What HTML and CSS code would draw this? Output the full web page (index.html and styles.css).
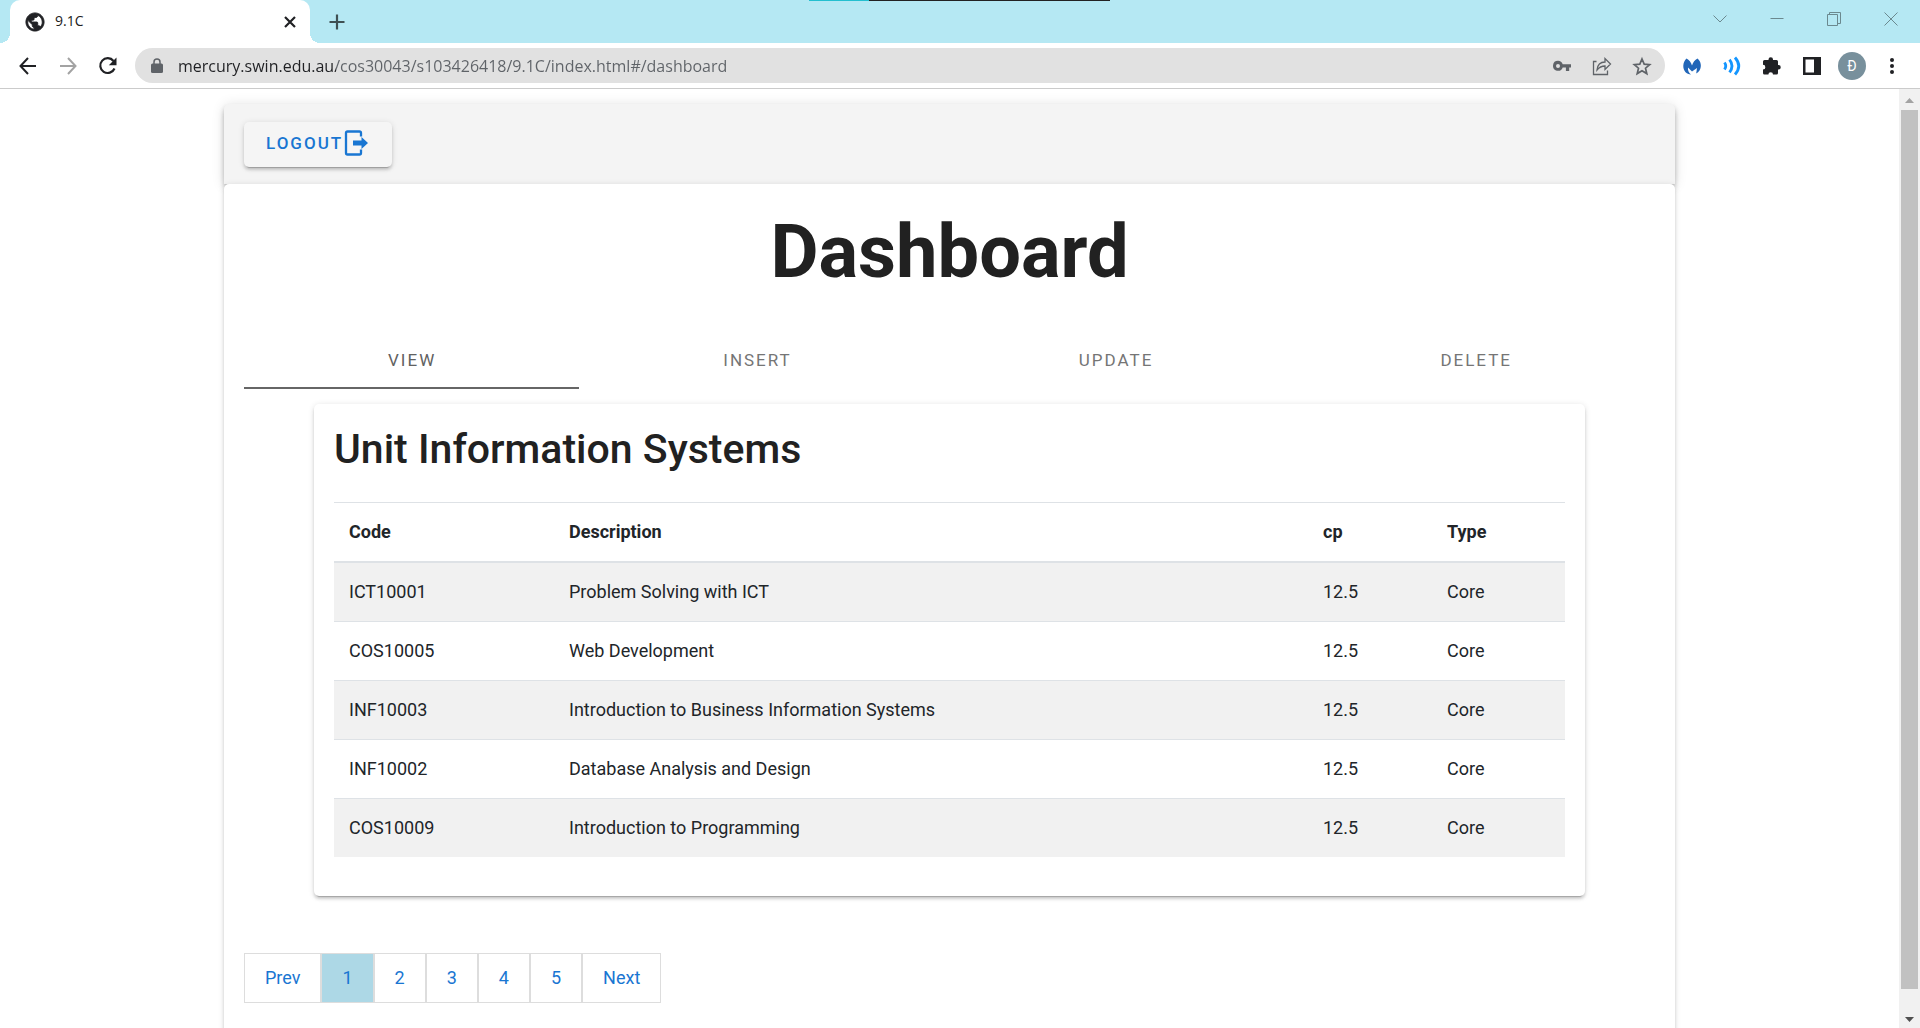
FILE: index.html
```html
<!DOCTYPE html>
<html lang="en">
<head>
<meta charset="utf-8">
<title>9.1C</title>
<link rel="stylesheet" href="styles.css">
</head>
<body>
<div class="browser">
  <header class="tabstrip">
    <div class="tab">
      <svg class="tab-icon" width="20" height="20" viewBox="1 1 22 22"><path d="M12 2C6.480 2 2 6.480 2 12s4.480 10 10 10 10-4.480 10-10S17.520 2 12 2zm-1 17.930c-3.950-.490-7-3.850-7-7.930 0-.620.080-1.210.210-1.790L9 15v1c0 1.100.9 2 2 2v1.930zm6.900-2.540c-.260-.810-1-1.390-1.900-1.390h-1v-3c0-.550-.450-1-1-1H8v-2h2c.550 0 1-.450 1-1V7h2c1.100 0 2-.9 2-2v-.410c2.930 1.190 5 4.060 5 7.410 0 2.080-.8 3.970-2.100 5.390z" fill="#202124" stroke="#202124"/></svg>
      <span class="tab-title">9.1C</span>
      <button class="icon-button" type="button" aria-label="Close tab"><svg width="20" height="20" viewBox="0 0 20 20"><path d="M5 5l10 10M15 5L5 15" stroke="#202124" stroke-width="2.200"/></svg></button>
    </div>
    <button class="icon-button new-tab" type="button" aria-label="New tab"><svg width="20" height="20" viewBox="0 0 20 20"><path d="M10 2.500v15M2.500 10h15" stroke="#3f5053" stroke-width="2.200"/></svg></button>
    <div class="window-controls">
      <button class="icon-button" type="button" aria-label="Search tabs"><svg width="14" height="14" viewBox="0 0 14 14"><path d="M.5 3.500L7 10l6.500-6.500" fill="none" stroke="#6b898f"/></svg></button>
      <button class="icon-button" type="button" aria-label="Minimize"><svg width="14" height="14" viewBox="0 0 14 14"><path d="M.5 6.500h13" stroke="#6b898f"/></svg></button>
      <button class="icon-button" type="button" aria-label="Restore"><svg width="14" height="14" viewBox="0 0 14 14"><path d="M.5 2.500h10v11H.5zM2.500 2V.5h11v11H11" fill="none" stroke="#6b898f"/></svg></button>
      <button class="icon-button" type="button" aria-label="Close window"><svg width="14" height="14" viewBox="0 0 14 14"><path d="M.5.5l13 13M13.500.5l-13 13" stroke="#6b898f"/></svg></button>
    </div>
    <div class="screen-edge"></div>
  </header>

  <div class="toolbar">
    <button class="icon-button" type="button" aria-label="Back"><svg width="20" height="20" viewBox="0 0 20 20"><path d="M18 10H3M10 2L2.500 10l7.500 8" fill="none" stroke="#202124" stroke-width="2"/></svg></button>
    <button class="icon-button" type="button" aria-label="Forward"><svg width="20" height="20" viewBox="0 0 20 20"><path d="M2 10h15M10 2l7.500 8-7.500 8" fill="none" stroke="#a3a3a3" stroke-width="2"/></svg></button>
    <button class="icon-button" type="button" aria-label="Reload"><svg width="20" height="20" viewBox="0 0 20 20"><path d="M16.500 12.500A7.400 7.400 0 1 1 15.500 5" fill="none" stroke="#202124" stroke-width="2.200"/><path d="M18.500 1.500v7.700h-7.700z" fill="#202124"/></svg></button>
    <div class="omnibox">
      <svg width="12" height="16" viewBox="0 0 12 16"><path d="M1.500 5.500h9q1.500 0 1.500 1.500v6.500q0 1.500-1.500 1.500h-9Q0 15 0 13.500V7q0-1.500 1.500-1.500z" fill="#5f6368"/><path d="M3 6V4a3 3 0 0 1 6 0v2" fill="none" stroke="#5f6368" stroke-width="1.500"/></svg>
      <input class="address" type="text" aria-label="Address" value="mercury.swin.edu.au/cos30043/s103426418/9.1C/index.html#/dashboard">
      <button class="icon-button" type="button" aria-label="Passwords"><svg width="20" height="20" viewBox="0 0 20 20"><path d="M6 4.800a5 5 0 1 0 4.700 6.700h3.200V15h3.300v-3.500H19v-3.200h-8.300A5 5 0 0 0 6 4.800zm0 3.200a2 2 0 1 1 0 4 2 2 0 0 1 0-4z" fill="#5f6368"/></svg></button>
      <button class="icon-button" type="button" aria-label="Share"><svg width="20" height="20" viewBox="0 0 20 20"><path d="M4.500 5.500H1.500v13h14v-4M5 14c.5-5 3.500-8 8-8V2.500l5.500 5.500-5.500 5.500V10c-3.500 0-6 1.500-8 4z" fill="none" stroke="#5f6368" stroke-width="1.300"/></svg></button>
      <button class="icon-button" type="button" aria-label="Bookmark"><svg width="20" height="20" viewBox="0 0 20 20"><path d="M10 3l2.200 5.100 5.500.5-4.200 3.600 1.300 5.400-4.800-2.900-4.800 2.900 1.300-5.400L2.300 8.600l5.500-.5z" fill="none" stroke="#5f6368" stroke-width="1.700"/></svg></button>
    </div>
    <div class="extensions">
      <button class="icon-button" type="button" aria-label="Malwarebytes"><svg width="20" height="20" viewBox="0 0 20 20"><path d="M4.500 2.500Q8.500 4.500 10 9.500q1.500-5 5.500-7c3.500 3 4.500 8 2 12-.8 1.300-2 2.200-3.300 3l.8-5.500L10 15.500 6 11.500C5.500 14 7 17 9 18.500 4.500 18.500 1 14.500 1.300 9.500c.2-3 1.200-5 3.200-7z" fill="#2166b8"/></svg></button>
      <button class="icon-button" type="button" aria-label="Read aloud"><svg width="20" height="20" viewBox="0 0 20 20"><path d="M2.500 6.500q2.500 3.500 0 7M7.500 3.700q5 6.300 0 12.600M13 1.500q7.500 8.500 0 17" fill="none" stroke="#1496ff" stroke-width="2.800"/></svg></button>
      <button class="icon-button" type="button" aria-label="Extensions"><svg width="20" height="20" viewBox="0 0 20 20"><path d="M2.500 4h4V3.500a2.200 2.200 0 0 1 4.500 0V4h3.500q1.500 0 1.500 1.500V9h.5a2.200 2.200 0 0 1 0 4.500H16V17q0 1.500-1.500 1.500H11a2.300 2.300 0 0 0-4.600 0h-4Q1 18.500 1 17v-3.500a2.300 2.300 0 0 0 0-4.700V5.500Q1 4 2.500 4z" fill="#202124"/></svg></button>
      <button class="icon-button" type="button" aria-label="Side panel"><svg width="20" height="20" viewBox="0 0 20 20"><path d="M1 1h18v18H1zM3.500 3.500v13H12v-13z" fill="#202124" fill-rule="evenodd"/></svg></button>
      <button class="avatar" type="button" aria-label="Profile">Đ</button>
      <button class="icon-button" type="button" aria-label="Menu"><svg width="20" height="20" viewBox="0 0 20 20"><g fill="#202124"><circle cx="10" cy="4" r="2"/><circle cx="10" cy="10" r="2"/><circle cx="10" cy="16" r="2"/></g></svg></button>
    </div>
  </div>

  <div class="viewport">
    <main class="page">
      <div class="card app-bar">
        <button class="button" type="button">LOGOUT<svg width="24" height="26" viewBox="0 0 24 26"><path d="M17 6.500V3q0-1.500-1.500-1.500h-12Q2 1.500 2 3v20q0 1.500 1.500 1.500h12Q17 24.500 17 23v-3.500" fill="none" stroke="#1976d2" stroke-width="2.300"/><path d="M9 10.500h8.500V7l6.500 6-6.500 6v-3.500H9z" fill="#1976d2"/></svg></button>
      </div>
      <section class="card content">
        <h1 class="title">Dashboard</h1>
        <div class="tabs" role="tablist">
          <button class="tabs-item tabs-item-active" type="button" role="tab" aria-selected="true">VIEW</button>
          <button class="tabs-item" type="button" role="tab">INSERT</button>
          <button class="tabs-item" type="button" role="tab">UPDATE</button>
          <button class="tabs-item" type="button" role="tab">DELETE</button>
        </div>
        <div class="card units">
          <h2 class="units-title">Unit Information Systems</h2>
          <table class="table">
            <thead>
              <tr><th class="col-code">Code</th><th>Description</th><th class="col-cp">cp</th><th class="col-type">Type</th></tr>
            </thead>
            <tbody>
              <tr><td>ICT10001</td><td>Problem Solving with ICT</td><td>12.5</td><td>Core</td></tr>
              <tr><td>COS10005</td><td>Web Development</td><td>12.5</td><td>Core</td></tr>
              <tr><td>INF10003</td><td>Introduction to Business Information Systems</td><td>12.5</td><td>Core</td></tr>
              <tr><td>INF10002</td><td>Database Analysis and Design</td><td>12.5</td><td>Core</td></tr>
              <tr><td>COS10009</td><td>Introduction to Programming</td><td>12.5</td><td>Core</td></tr>
            </tbody>
          </table>
        </div>
        <nav class="pagination" aria-label="Pages">
          <a class="page-link" href="#prev">Prev</a>
          <a class="page-link page-link-current" href="#1" aria-current="page">1</a>
          <a class="page-link" href="#2">2</a>
          <a class="page-link" href="#3">3</a>
          <a class="page-link" href="#4">4</a>
          <a class="page-link" href="#5">5</a>
          <a class="page-link" href="#next">Next</a>
        </nav>
      </section>
    </main>
    <div class="scrollbar" aria-hidden="true">
      <svg width="9" height="5" viewBox="0 0 9 5"><path d="M0 5l4.500-5L9 5z" fill="#a3a3a3"/></svg>
      <div class="scrollbar-thumb"></div>
      <svg width="9" height="5" viewBox="0 0 9 5"><path d="M0 0l4.500 5L9 0z" fill="#505050"/></svg>
    </div>
  </div>
</div>
</body>
</html>
```
FILE: styles.css
```css
* {
  box-sizing: border-box;
}

body {
  margin: 0;
  background: #fff;
  color: #212121;
  font-family: Roboto, "Liberation Sans", sans-serif;
  font-size: 18px;
  line-height: 28px;
}

button {
  border: 0;
  padding: 0;
  background: none;
  color: inherit;
  font: inherit;
}

svg {
  display: block;
  flex: none;
}

.browser {
  display: flex;
  flex-direction: column;
  height: 100vh;
  overflow: hidden;
}

.icon-button {
  display: flex;
  align-items: center;
  justify-content: center;
}

/* Tab strip */
.tabstrip {
  position: relative;
  display: flex;
  flex: none;
  height: 43px;
  padding: 0 1px 0 10px;
  background: #b5e8f3;
}

.tab {
  position: relative;
  display: flex;
  align-items: center;
  width: 300px;
  padding: 0 10px 0 15px;
  border-radius: 10px 10px 0 0;
  background: #fff;
  font-family: "Open Sans", "Noto Sans", sans-serif;
  font-size: 14px;
}

.tab::before,
.tab::after {
  content: "";
  position: absolute;
  bottom: 0;
  width: 10px;
  height: 10px;
}

.tab::before {
  right: 100%;
  background: radial-gradient(circle at 0 0, #b5e8f3 10px, #fff 10px);
}

.tab::after {
  left: 100%;
  background: radial-gradient(circle at 100% 0, #b5e8f3 10px, #fff 10px);
}

.tab-title {
  flex: 1;
  padding: 0 10px 2px;
}

.new-tab {
  margin-left: 17px;
}

.window-controls {
  display: flex;
  height: 38px;
  margin-left: auto;
}

.window-controls .icon-button {
  width: 57px;
}

.screen-edge {
  position: absolute;
  top: 0;
  left: 809px;
  width: 301px;
  height: 1px;
  background: linear-gradient(to right, #23bfcf 60px, #222 60px);
}

/* Address toolbar */
.toolbar {
  display: flex;
  flex: none;
  align-items: center;
  gap: 20px;
  height: 46px;
  padding: 0 18px;
  border-bottom: 1px solid #cbcbcb;
}

.omnibox {
  display: flex;
  flex: 1;
  align-items: center;
  gap: 20px;
  height: 35px;
  margin-left: -3px;
  padding: 0 13px 0 16px;
  border-radius: 18px;
  background: #e1e1e1;
}

.address {
  flex: 1;
  min-width: 0;
  margin-left: -5px;
  border: 0;
  padding: 0;
  background: linear-gradient(to right, #202124 158px, #5f6368 158px);
  background-clip: text;
  color: transparent;
  font-family: "Open Sans", "Noto Sans", sans-serif;
  font-size: 16px;
}

.extensions {
  display: flex;
  align-items: center;
  gap: 20px;
  margin-left: -3px;
}

.avatar {
  width: 28px;
  height: 28px;
  margin: 0 -4px;
  border-radius: 50%;
  background: #78909c;
  color: #fff;
  font-size: 14px;
}

/* Page */
.viewport {
  display: flex;
  flex: 1;
  min-height: 0;
}

.page {
  flex: 1;
  padding: 15px 224px 0;
  overflow: hidden;
}

.card {
  border-radius: 5px;
  background: #fff;
  box-shadow: 0 4px 1px -3px rgba(0, 0, 0, 0.2), 0 3px 3px 0 rgba(0, 0, 0, 0.14), 0 1px 6px 0 rgba(0, 0, 0, 0.12);
}

.app-bar {
  height: 80px;
  padding: 18px 20px;
  border-radius: 5px 5px 0 0;
  background: #f4f4f4;
  box-shadow: 0 3px 5px -1px rgba(0, 0, 0, 0.2), 0 5px 6px 0 rgba(0, 0, 0, 0.14), 0 1px 13px 0 rgba(0, 0, 0, 0.12);
}

.button {
  display: flex;
  align-items: flex-start;
  gap: 1px;
  height: 45px;
  padding: 8px 24px 0 22px;
  border-radius: 5px;
  background: #f5f5f5;
  box-shadow: 0 4px 1px -3px rgba(0, 0, 0, 0.2), 0 3px 3px 0 rgba(0, 0, 0, 0.14), 0 1px 6px 0 rgba(0, 0, 0, 0.12);
  color: #1976d2;
  font-size: 17px;
  font-weight: 500;
  line-height: 26px;
  letter-spacing: 2px;
}

.content {
  position: relative;
  min-height: 100%;
  padding: 20px;
}

.title {
  margin: 0;
  font-size: 74px;
  font-weight: 700;
  line-height: 96px;
  text-align: center;
}

.tabs {
  display: flex;
  margin-top: 29px;
}

.tabs-item {
  flex: 1 1 auto;
  height: 60px;
  padding: 3px 19px 0 20px;
  border-bottom: 2px solid transparent;
  color: #757575;
  font-size: 17px;
  letter-spacing: 2px;
}

.tabs-item-active {
  border-bottom-color: #666;
  color: #616161;
}

.units {
  margin: 15px 70px 0;
  padding: 20px 20px 39px;
}

.units-title {
  margin: 0 0 28px;
  font-size: 41px;
  font-weight: 500;
  line-height: 50px;
}

.table {
  width: 100%;
  border-collapse: separate;
  border-spacing: 0;
  color: #212529;
  text-align: left;
}

.table th {
  padding: 15px;
  border-top: 1px solid #dee2e6;
  border-bottom: 2px solid #dee2e6;
  font-weight: 700;
}

.table td {
  padding: 15px;
  border-bottom: 1px solid #dee2e6;
}

.table tr:last-child td {
  border-bottom: 0;
}

.table tbody tr:nth-child(odd) {
  background: #f1f1f1;
}

.col-code {
  width: 220px;
}

.col-cp {
  width: 124px;
}

.col-type {
  width: 133px;
}

.pagination {
  display: flex;
  margin-top: 57px;
}

.page-link {
  padding: 10px 20px;
  border: 1px solid #ddd;
  color: #1976d2;
  text-decoration: none;
}

.page-link-current {
  background: #add8e6;
}

/* Scrollbar */
.scrollbar {
  display: flex;
  flex-direction: column;
  align-items: center;
  gap: 7px;
  width: 21px;
  padding: 9px 2px 6px;
  background: #f1f1f1;
}

.scrollbar-thumb {
  flex: 1;
  width: 17px;
  margin-bottom: 21px;
  background: #c1c1c1;
}
```
